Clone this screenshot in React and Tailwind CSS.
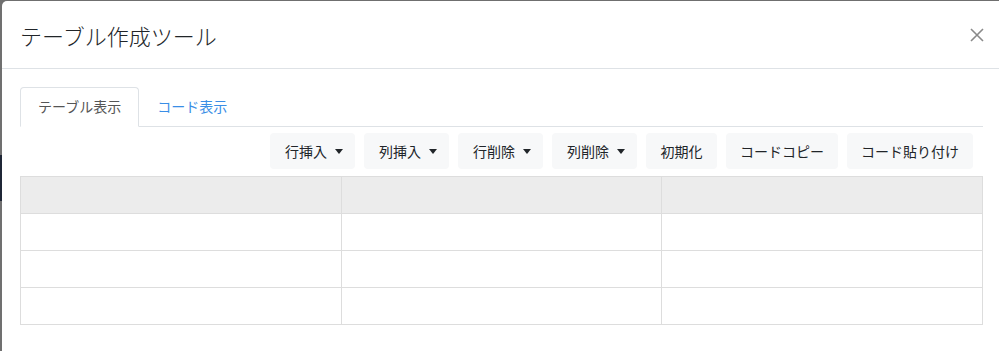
import React from "react";

const font = { fontFamily: '"Noto Sans CJK JP", "Noto Sans", sans-serif' };

function Caret() {
  return (
    <span className="ml-[8px] inline-block h-0 w-0 border-l-[4px] border-r-[4px] border-t-[5px] border-l-transparent border-r-transparent border-t-[#212529]" />
  );
}

function Btn({ children, caret, w }) {
  return (
    <button
      className={`flex h-[36px] items-center justify-center rounded-[4px] bg-[#f7f8f9] text-[14px] leading-[21px] text-[#212529] ${w} ${
        caret ? "pl-[3px]" : ""
      }`}
    >
      <span>{children}</span>
      {caret && <Caret />}
    </button>
  );
}

export default function App() {
  const rows = [0, 1, 2];
  const cols = [0, 1, 2];
  return (
    <div className="flex h-[351px] w-[999px] overflow-hidden bg-[#6f6f6f]" style={font}>
      <div className="flex w-[2px] shrink-0 flex-col">
        <div className="h-[155px] bg-[#707070]" />
        <div className="h-[46px] bg-[#1f2636]" />
        <div className="flex-1 bg-[#707070]" />
      </div>
      <div className="mt-[1px] flex w-[999px] shrink-0 flex-col rounded-tl-[5px] bg-white">
        <div className="flex h-[68px] items-center justify-between border-b border-[#dee2e6] pl-[18px] pr-[17px]">
          <h5 className="text-[22px] font-light leading-[30px] text-[#212529]">テーブル作成ツール</h5>
          <svg width="14" height="14" viewBox="0 0 14 14">
            <path d="M1 1 L13 13 M13 1 L1 13" stroke="#8a8a8a" strokeWidth="1.6" />
          </svg>
        </div>
        <div className="px-[18px] pt-[18px]">
          <div className="flex w-[963px] border-b border-[#dee2e6]">
            <div className="-mb-px rounded-t-[4px] border border-[#dee2e6] border-b-white bg-white px-[17px] py-[8px] text-[14px] leading-[21px] text-[#555]">
              テーブル表示
            </div>
            <div className="border border-transparent px-[17px] py-[8px] text-[14px] leading-[21px] text-[#3a8ee6]">
              コード表示
            </div>
          </div>
          <div className="mt-[6px] flex w-[963px] justify-end gap-[9px] pr-[10px]">
            <Btn caret w="w-[85px]">行挿入</Btn>
            <Btn caret w="w-[85px]">列挿入</Btn>
            <Btn caret w="w-[85px]">行削除</Btn>
            <Btn caret w="w-[85px]">列削除</Btn>
            <Btn w="w-[71px]">初期化</Btn>
            <Btn w="w-[112px]">コードコピー</Btn>
            <Btn w="w-[126px]">コード貼り付け</Btn>
          </div>
          <table className="mt-[7px] w-[963px] table-fixed border-collapse">
            <thead>
              <tr className="h-[37px] bg-[#ececec]">
                {cols.map((c) => (
                  <th key={c} className="border border-[#dddddd]" />
                ))}
              </tr>
            </thead>
            <tbody>
              {rows.map((r) => (
                <tr key={r} className="h-[37px]">
                  {cols.map((c) => (
                    <td key={c} className="border border-[#dddddd]" />
                  ))}
                </tr>
              ))}
            </tbody>
          </table>
        </div>
      </div>
    </div>
  );
}
